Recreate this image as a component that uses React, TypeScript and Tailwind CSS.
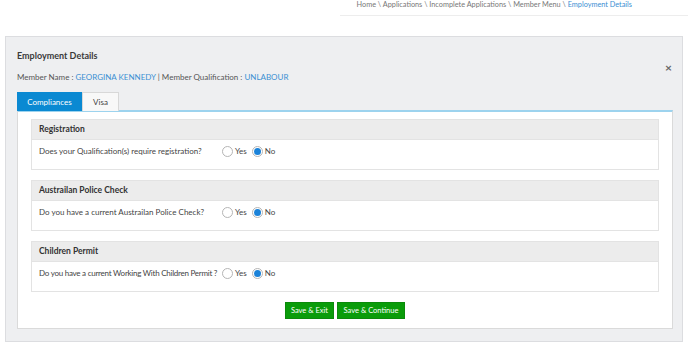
const sections = [
  { title: 'Registration', question: 'Does your Qualification(s) require registration?', tight: false },
  { title: 'Austrailan Police Check', question: 'Do you have a current Austrailan Police Check?', tight: false },
  { title: 'Children Permit', question: 'Do you have a current Working With Children Permit ?', tight: true },
];

function Radio({ checked }: { checked?: boolean }) {
  return (
    <span className="inline-flex h-[11px] w-[11px] shrink-0 items-center justify-center rounded-full border border-[#b5b5b5] bg-white">
      {checked && <span className="h-[7px] w-[7px] rounded-full bg-[#1a82d9]" />}
    </span>
  );
}

export default function App() {
  return (
    <div
      className="h-[347px] w-[688px] overflow-hidden bg-white text-[#444]"
      style={{ fontFamily: 'Lato, "Open Sans", sans-serif' }}
    >
      {/* Breadcrumb */}
      <div className="ml-[340px] flex h-[16px] items-start justify-end border-b border-[#ededed] pr-[56px]">
        <p className="whitespace-nowrap text-[7.3px] leading-[10px] text-[#777]">
          Home \ Applications \ Incomplete Applications \ Member Menu \{' '}
          <span className="text-[#3b8fd3]">Employment Details</span>
        </p>
      </div>

      {/* Panel */}
      <div className="relative mx-[5px] mt-[20px] h-[306px] border border-[#dcdde0] bg-[#eeeff1] px-[11px] pt-[13px]">
        <h2 className="text-[9px] font-bold leading-[12px] text-[#3a3a3a]">Employment Details</h2>
        <p className="mt-[9px] text-[8px] leading-[12px] text-[#555]">
          Member Name : <span className="text-[#3b8fd3]">GEORGINA KENNEDY</span> | Member Qualification :{' '}
          <span className="text-[#3b8fd3]">UNLABOUR</span>
        </p>
        <span className="absolute right-[10px] top-[25px] text-[12px] font-bold leading-[12px] text-[#666]">×</span>

        {/* Tabs */}
        <div className="mt-[9px] flex h-[19px]">
          <div className="flex w-[65px] items-center justify-center bg-[#0a89d2] text-[8px] text-white">Compliances</div>
          <div className="flex w-[37px] items-center justify-center border border-b-0 border-[#d8d8d8] bg-[#f8f8f8] text-[8px] text-[#444]">
            Visa
          </div>
        </div>

        {/* Tab content */}
        <div className="-mt-[1px] h-[219px] w-[656px] border border-t-2 border-[#dadada] border-t-[#9dd3ee] bg-white px-[13px] pt-[7px]">
          {sections.map((s) => (
            <div key={s.title} className="mb-[10px] h-[51px] border border-[#e3e3e3]">
              <div className="flex h-[20px] items-center border-b border-[#e3e3e3] bg-[#ececec] px-[7px] text-[8.5px] font-bold text-[#333]">
                {s.title}
              </div>
              <div className="flex items-center px-[7px] pt-[6px] text-[8px] leading-[11px]">
                <span className={s.tight ? 'w-[183px] shrink-0 whitespace-nowrap tracking-[-0.25px]' : 'w-[183px] shrink-0 whitespace-nowrap'}>
                  {s.question}
                </span>
                <Radio />
                <span className="ml-[2px] mr-[5px]">Yes</span>
                <Radio checked />
                <span className="ml-[2px]">No</span>
              </div>
            </div>
          ))}
          <div className="flex justify-center gap-[3px]">
            <button className="h-[17px] w-[49px] border border-[#0b8a0b] bg-[#0a9c0a] text-[7.5px] text-white">Save &amp; Exit</button>
            <button className="h-[17px] w-[68px] border border-[#0b8a0b] bg-[#0a9c0a] text-[7.5px] text-white">Save &amp; Continue</button>
          </div>
        </div>
      </div>
    </div>
  );
}
